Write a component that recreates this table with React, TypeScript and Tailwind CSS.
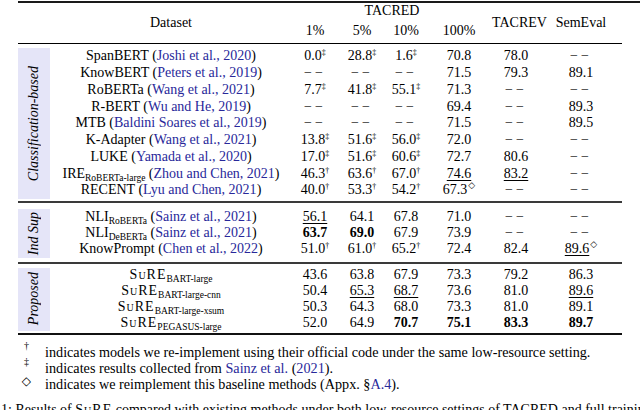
import React from "react";

const COLS = "grid grid-cols-[242px_46px_48px_40px_66px_48px_82px] items-center";
const HEAD = "grid grid-cols-[32px_242px_46px_48px_40px_66px_48px_82px] grid-rows-[16px_24px] items-center";

type Row = { name: React.ReactNode; vals: string[] };

const Cite = ({ children }: { children: React.ReactNode }) => (
  <>
    {" "}(<span className="text-[#28289a]">{children}</span>)
  </>
);

const Sub = ({ children }: { children: React.ReactNode }) => (
  <span className="relative top-[3px] text-[9.5px]">{children}</span>
);

const Sure = ({ sub }: { sub: string }) => (
  <>
    <span className="tracking-[1px] [font-variant:small-caps]">SuRE</span>
    <Sub>{sub}</Sub>
  </>
);

// "56.1_" underline, "63.7*" bold, trailing ‡ † ◇ as a raised mark, "-" for none
function Value({ raw }: { raw: string }) {
  if (raw === "-") return <span className="tracking-[3px] text-[#222]">−−</span>;
  let s = raw;
  let mark = "";
  if ("‡†◇".includes(s.slice(-1))) {
    mark = s.slice(-1);
    s = s.slice(0, -1);
  }
  const bold = s.endsWith("*");
  const under = s.endsWith("_");
  if (bold || under) s = s.slice(0, -1);
  return (
    <span className="whitespace-nowrap">
      <span className={`${bold ? "font-bold" : ""} ${under ? "underline decoration-1 underline-offset-[2px]" : ""}`}>{s}</span>
      {mark === "◇" && <span className="relative -top-[6px] ml-[1px] font-['DejaVu_Sans',sans-serif] text-[9px]">◇</span>}
      {mark && mark !== "◇" && <span className="relative -top-[5px] text-[8px]">{mark}</span>}
    </span>
  );
}

const classification: Row[] = [
  { name: <>SpanBERT<Cite>Joshi et al., 2020</Cite></>, vals: ["0.0‡", "28.8‡", "1.6‡", "70.8", "78.0", "-"] },
  { name: <>KnowBERT<Cite>Peters et al., 2019</Cite></>, vals: ["-", "-", "-", "71.5", "79.3", "89.1"] },
  { name: <>RoBERTa<Cite>Wang et al., 2021</Cite></>, vals: ["7.7‡", "41.8‡", "55.1‡", "71.3", "-", "-"] },
  { name: <>R-BERT<Cite>Wu and He, 2019</Cite></>, vals: ["-", "-", "-", "69.4", "-", "89.3"] },
  { name: <>MTB<Cite>Baldini Soares et al., 2019</Cite></>, vals: ["-", "-", "-", "71.5", "-", "89.5"] },
  { name: <>K-Adapter<Cite>Wang et al., 2021</Cite></>, vals: ["13.8‡", "51.6‡", "56.0‡", "72.0", "-", "-"] },
  { name: <>LUKE<Cite>Yamada et al., 2020</Cite></>, vals: ["17.0‡", "51.6‡", "60.6‡", "72.7", "80.6", "-"] },
  { name: <>IRE<Sub>RoBERTa-large</Sub><Cite>Zhou and Chen, 2021</Cite></>, vals: ["46.3†", "63.6†", "67.0†", "74.6_", "83.2_", "-"] },
  { name: <>RECENT<Cite>Lyu and Chen, 2021</Cite></>, vals: ["40.0†", "53.3†", "54.2†", "67.3◇", "-", "-"] },
];

const indSup: Row[] = [
  { name: <>NLI<Sub>RoBERTa</Sub><Cite>Sainz et al., 2021</Cite></>, vals: ["56.1_", "64.1", "67.8", "71.0", "-", "-"] },
  { name: <>NLI<Sub>DeBERTa</Sub><Cite>Sainz et al., 2021</Cite></>, vals: ["63.7*", "69.0*", "67.9", "73.9", "-", "-"] },
  { name: <>KnowPrompt<Cite>Chen et al., 2022</Cite></>, vals: ["51.0†", "61.0†", "65.2†", "72.4", "82.4", "89.6_◇"] },
];

const proposed: Row[] = [
  { name: <Sure sub="BART-large" />, vals: ["43.6", "63.8", "67.9", "73.3", "79.2", "86.3"] },
  { name: <Sure sub="BART-large-cnn" />, vals: ["50.4", "65.3_", "68.7_", "73.6", "81.0", "89.6_"] },
  { name: <Sure sub="BART-large-xsum" />, vals: ["50.3", "64.3", "68.0", "73.3", "81.0", "89.1"] },
  { name: <Sure sub="PEGASUS-large" />, vals: ["52.0", "64.9", "70.7*", "75.1*", "83.3*", "89.7*"] },
];

function Section({ label, rows, rowH }: { label: string; rows: Row[]; rowH: string }) {
  return (
    <div className="flex">
      <div className="flex w-[32px] items-center justify-center bg-[#e5e5f8]">
        <span className="rotate-180 italic [writing-mode:vertical-rl]">{label}</span>
      </div>
      <div>
        {rows.map((r, i) => (
          <div key={i} className={`${COLS} ${rowH}`}>
            <div className="whitespace-nowrap text-center">{r.name}</div>
            {r.vals.map((v, j) => (
              <div key={j} className="text-center">
                <Value raw={v} />
              </div>
            ))}
          </div>
        ))}
      </div>
    </div>
  );
}

export default function App() {
  return (
    <div className="relative h-[410px] w-[640px] overflow-hidden bg-white font-['Liberation_Serif',serif] text-[14px] leading-none text-black">
      <div className="ml-[18px] pt-[1px]">
        <div className="h-[2px] w-[622px] bg-[#1a1a1a]" />
        <div className={`${HEAD} w-[604px]`}>
          <div className="col-start-2 row-span-2 row-start-1 text-center">Dataset</div>
          <div className="col-span-4 col-start-3 row-start-1 text-center">TACRED</div>
          <div className="col-start-3 row-start-2 text-center">1%</div>
          <div className="col-start-4 row-start-2 text-center">5%</div>
          <div className="col-start-5 row-start-2 text-center">10%</div>
          <div className="col-start-6 row-start-2 text-center">100%</div>
          <div className="col-start-7 row-span-2 row-start-1 text-center">TACREV</div>
          <div className="col-start-8 row-span-2 row-start-1 text-center">SemEval</div>
        </div>
        <div className="h-[1px] w-[604px] bg-black" />
        <div className="w-[604px] pt-[4px]">
          <Section label="Classification-based" rows={classification} rowH="h-[16.75px]" />
          <div className="mb-[6px] mt-[2px] h-[2px] bg-[#3a3a3a]" />
          <Section label="Ind Sup" rows={indSup} rowH="h-[16.25px]" />
          <div className="my-[4px] h-[2px] bg-[#3a3a3a]" />
          <Section label="Proposed" rows={proposed} rowH="h-[15.75px]" />
          <div className="mt-[2px] h-[2px] bg-[#111]" />
        </div>
      </div>

      <div className="mt-[9px] text-[14.2px] leading-[16px]">
        <div className="flex">
          <span className="relative -top-[6px] w-[45px] pr-[16px] text-right text-[10px]">†</span>
          <span>indicates models we re-implement using their official code under the same low-resource setting.</span>
        </div>
        <div className="flex">
          <span className="relative -top-[6px] w-[45px] pr-[16px] text-right text-[10px]">‡</span>
          <span>
            indicates results collected from <span className="text-[#28289a]">Sainz et al.</span> (
            <span className="text-[#28289a]">2021</span>).
          </span>
        </div>
        <div className="flex">
          <span className="relative -top-[3px] w-[45px] pr-[14px] text-right font-['DejaVu_Sans',sans-serif] text-[12px]">◇</span>
          <span>
            indicates we reimplement this baseline methods (Appx. §<span className="text-[#28289a]">A.4</span>).
          </span>
        </div>
      </div>

      <div className="mt-[10px] whitespace-nowrap pl-[1px] text-[14px] leading-[16px]">
        1: Results of <span className="tracking-[1px] [font-variant:small-caps]">SuRE</span> compared with existing methods under both low-resource settings of TACRED and full training
      </div>
    </div>
  );
}
